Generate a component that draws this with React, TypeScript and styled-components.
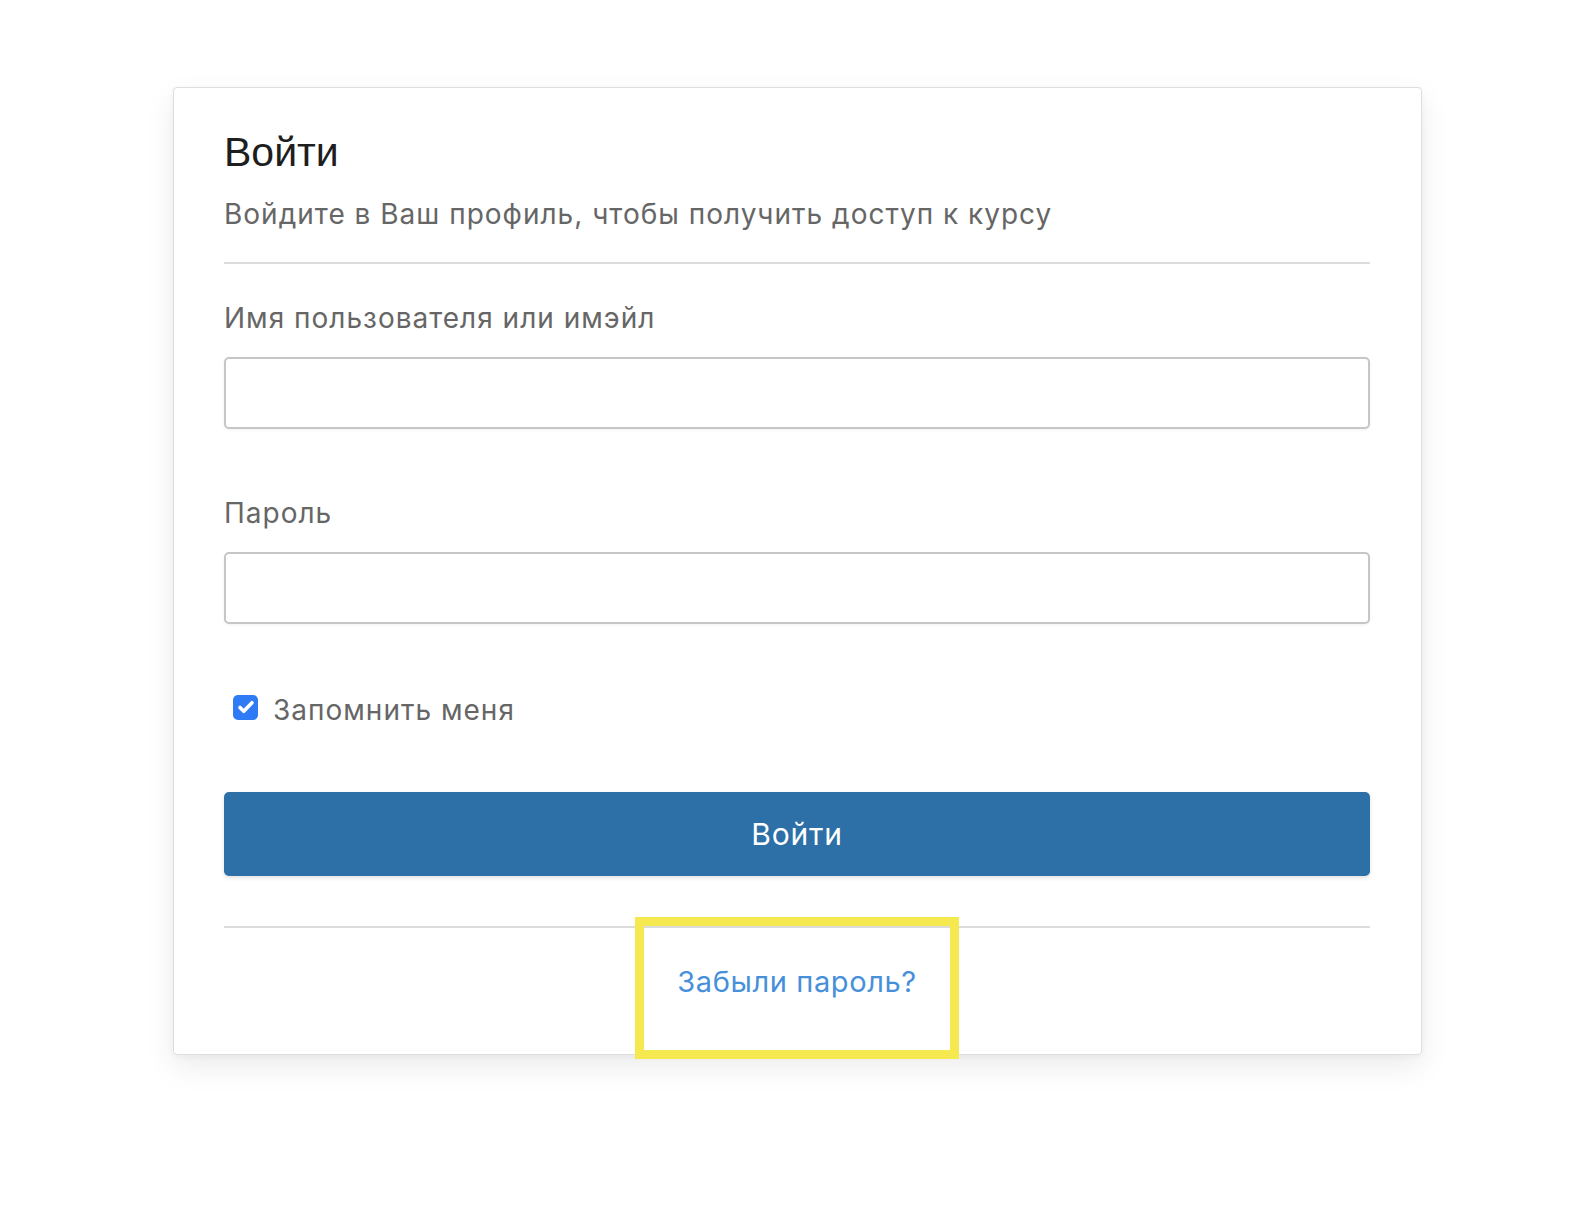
import React from 'react';
import styled, { createGlobalStyle } from 'styled-components';

const GlobalStyle = createGlobalStyle`
  html, body {
    margin: 0;
    padding: 0;
    background: #ffffff;
  }
  body {
    font-family: Inter, "Liberation Sans", Arial, sans-serif;
    -webkit-font-smoothing: antialiased;
  }
`;

const Page = styled.div`
  padding: 87px 0 150px;
`;

const Card = styled.form`
  position: relative;
  width: 1249px;
  margin-left: 173px;
  box-sizing: border-box;
  padding: 40px 51px 0 50px;
  background: #fff;
  border: 1px solid #dedede;
  border-radius: 4px;
  box-shadow: 0 12px 30px rgba(0, 0, 0, 0.08), 0 2px 6px rgba(0, 0, 0, 0.04);
  display: flex;
  flex-direction: column;
`;

const Title = styled.h1`
  margin: 0;
  font-family: "Liberation Sans", Arial, sans-serif;
  font-size: 41px;
  line-height: 48px;
  font-weight: 400;
  color: #1e1e1e;
`;

const Subtitle = styled.p`
  margin: 20px 0 0;
  font-size: 28px;
  line-height: 36px;
  letter-spacing: 1px;
  color: #666;
`;

const Divider = styled.hr<{ $top: number }>`
  margin: ${p => p.$top}px 0 0;
  border: 0;
  height: 2px;
  background: #dcdcdc;
`;

const Field = styled.div<{ $top: number }>`
  display: flex;
  flex-direction: column;
  gap: 21px;
  margin-top: ${p => p.$top}px;
`;

const Label = styled.label`
  font-size: 28px;
  line-height: 36px;
  letter-spacing: 1px;
  color: #666;
`;

const Input = styled.input`
  height: 72px;
  box-sizing: border-box;
  border: 2px solid #c6c6c6;
  border-radius: 5px;
  background: #fff;
  box-shadow: 0 1px 3px rgba(0, 0, 0, 0.06);
  outline: none;
  padding: 0 16px;
  font: inherit;
  font-size: 28px;
`;

const CheckRow = styled.label`
  display: flex;
  align-items: center;
  gap: 15px;
  margin-top: 68px;
  padding-left: 9px;
  font-size: 28px;
  line-height: 36px;
  letter-spacing: 1px;
  color: #666;
`;

const CheckBox = styled.span`
  width: 25px;
  height: 25px;
  border-radius: 5px;
  background: #2f7bf5;
  display: flex;
  align-items: center;
  justify-content: center;
  flex-shrink: 0;
  position: relative;
  top: -3px;
`;

const SubmitButton = styled.button`
  margin-top: 64px;
  height: 84px;
  border: 0;
  border-radius: 5px;
  background: #2d70a7;
  color: #fff;
  font: inherit;
  font-size: 30px;
  letter-spacing: 0.8px;
  box-shadow: 0 2px 4px rgba(0, 0, 0, 0.12);
  cursor: pointer;
`;

const Footer = styled.div`
  display: flex;
  justify-content: center;
  padding: 36px 0 54px;
`;

const ForgotLink = styled.a`
  color: #4690db;
  font-size: 29px;
  line-height: 36px;
  letter-spacing: 0.6px;
  text-decoration: none;
`;

const Highlight = styled.div`
  position: absolute;
  left: 461px;
  top: 829px;
  width: 324px;
  height: 142px;
  box-sizing: border-box;
  border: 9px solid #f5e94f;
  pointer-events: none;
`;

export default function App() {
  return (
    <>
      <GlobalStyle />
      <Page>
        <Card onSubmit={e => e.preventDefault()}>
          <Title>Войти</Title>
          <Subtitle>Войдите в Ваш профиль, чтобы получить доступ к курсу</Subtitle>
          <Divider $top={30} />
          <Field $top={36}>
            <Label htmlFor="login">Имя пользователя или имэйл</Label>
            <Input id="login" type="text" />
          </Field>
          <Field $top={66}>
            <Label htmlFor="password">Пароль</Label>
            <Input id="password" type="password" />
          </Field>
          <CheckRow>
            <CheckBox>
              <svg width="20" height="20" viewBox="0 0 16 16" fill="none">
                <path d="M3.2 8.4l3 3L12.8 4.6" stroke="#fff" strokeWidth="2.9" strokeLinecap="round" strokeLinejoin="round" />
              </svg>
            </CheckBox>
            Запомнить меня
          </CheckRow>
          <SubmitButton type="submit">Войти</SubmitButton>
          <Divider $top={50} />
          <Footer>
            <ForgotLink href="#">Забыли пароль?</ForgotLink>
          </Footer>
          <Highlight />
        </Card>
      </Page>
    </>
  );
}
